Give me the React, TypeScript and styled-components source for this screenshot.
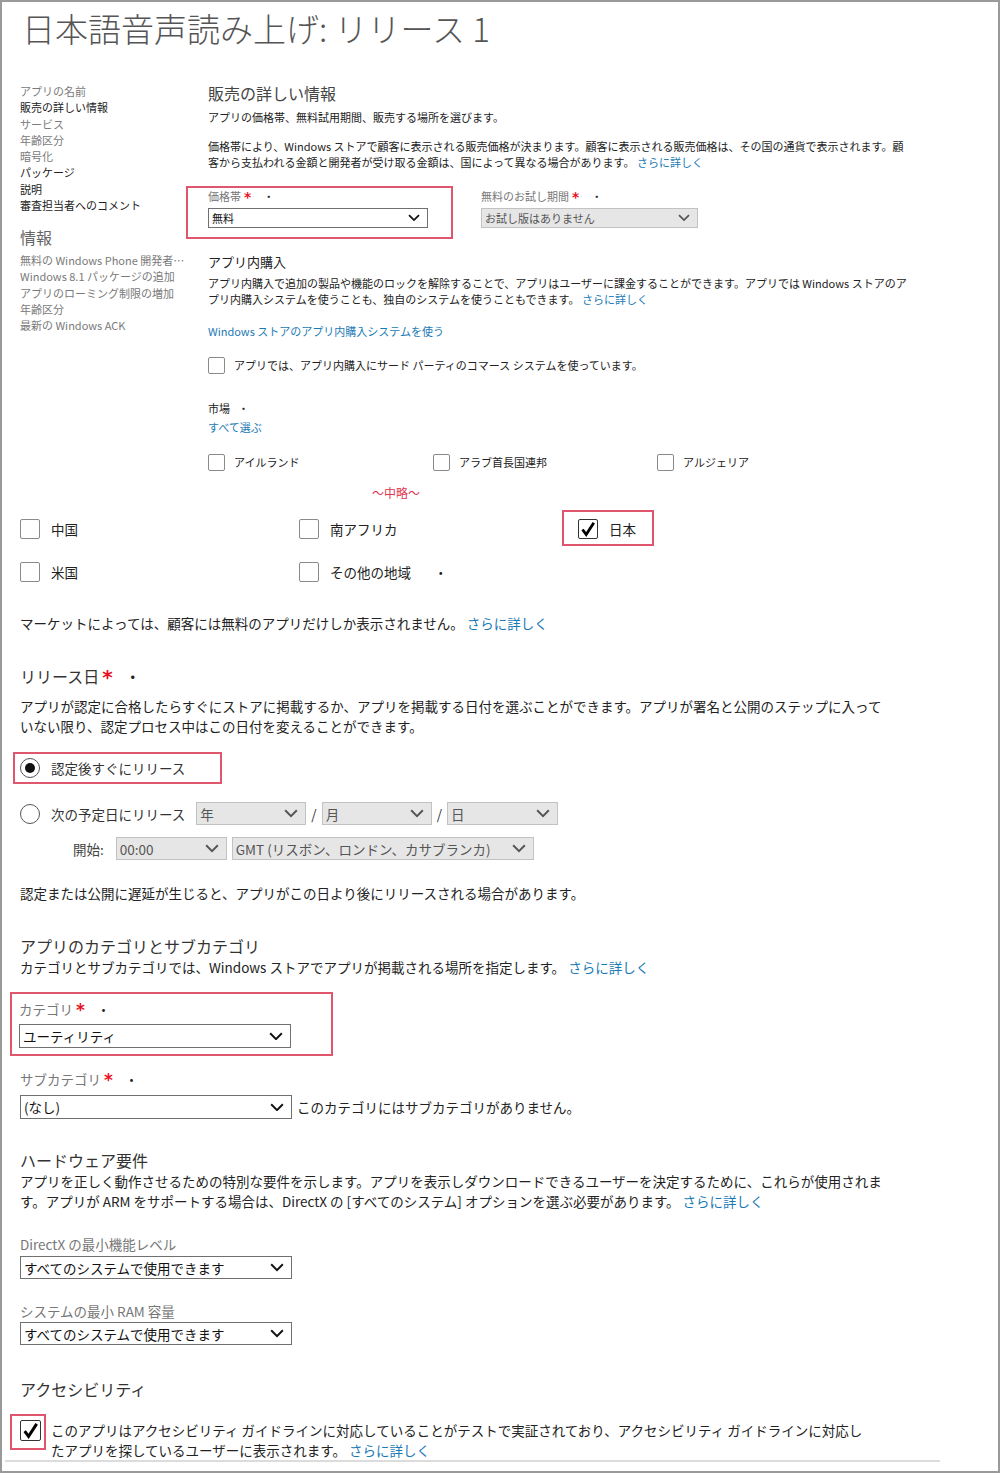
import React from "react";
import styled, { createGlobalStyle } from "styled-components";

const GlobalStyle = createGlobalStyle`
  body {
    margin: 0;
    background: #fff;
    color: #222;
    font-family: "Noto Sans CJK JP", "Noto Sans", sans-serif;
  }
`;

const Frame = styled.div`
  width: 1000px;
  height: 1473px;
  box-sizing: border-box;
  border: 2px solid #9a9a9a;
  overflow: hidden;
`;

const Title = styled.h1`
  margin: 6px 0 0 20px;
  font-size: 33px;
  line-height: 40px;
  font-weight: 300;
  color: #555;
  white-space: nowrap;
`;

/* ---------- upper (small scale) part ---------- */

const Top = styled.div`
  display: flex;
  margin-top: 35px;
  padding-left: 18px;
`;

const Sidebar = styled.nav`
  width: 188px;
  flex: none;
  font-size: 11px;
  line-height: 16.25px;
  white-space: nowrap;
`;

const NavItem = styled.div<{ $muted?: boolean }>`
  color: ${(p) => (p.$muted ? "#7a7a7a" : "#222")};
`;

const SideHeading = styled.div`
  margin-top: 14px;
  font-size: 16px;
  line-height: 20px;
  color: #666;
`;

const InfoList = styled.div`
  margin-top: 5px;
  color: #7a7a7a;
`;

const Main = styled.main`
  flex: 1;
  min-width: 0;
`;

const SectionTitle = styled.h2`
  margin: 0;
  font-size: 16px;
  line-height: 20px;
  font-weight: 400;
  color: #444;
`;

const SubTitle = styled.h3<{ $mt: number }>`
  margin: ${(p) => p.$mt}px 0 0;
  font-size: 13px;
  line-height: 18px;
  font-weight: 400;
  color: #222;
`;

const Small = styled.p<{ $mt: number }>`
  margin: ${(p) => p.$mt}px 0 0;
  font-size: 11px;
  line-height: 16px;
  white-space: nowrap;
  color: #222;
`;

const Link = styled.a`
  color: #1b7ab5;
  text-decoration: none;
`;

const FieldRow = styled.div`
  display: flex;
  gap: 6px;
  margin: 16px 0 0 -22px;
`;

const Field = styled.div<{ $hl?: boolean }>`
  border: 2px solid ${(p) => (p.$hl ? "#e0566c" : "transparent")};
  padding: 0 23px 9px 20px;
  display: flex;
  flex-direction: column;
  gap: 4px;
`;

const FieldLabel = styled.div`
  font-size: 11px;
  line-height: 16px;
  color: #777;
  white-space: nowrap;
`;

const Asterisk = styled.span`
  font-family: "DejaVu Sans", sans-serif;
  color: #e81123;
  font-weight: 700;
  font-size: 1.25em;
  line-height: 0;
  vertical-align: -0.05em;
  margin-left: 3px;
`;

const Dot = styled.span<{ $ml: number }>`
  margin-left: ${(p) => p.$ml}px;
  color: #222;
`;

const CheckRow = styled.label<{ $mt: number; $gap: number }>`
  display: flex;
  align-items: center;
  gap: ${(p) => p.$gap}px;
  margin-top: ${(p) => p.$mt}px;
  white-space: nowrap;
`;

const SmallCheckText = styled.span`
  font-size: 11px;
  line-height: 18px;
`;

const MarketGrid = styled.div`
  display: grid;
  grid-template-columns: 225px 224px 200px;
  margin-top: 18px;
`;

const Omitted = styled.div`
  margin-top: 14px;
  padding-left: 164px;
  font-size: 12px;
  line-height: 16px;
  color: #e0364f;
`;

/* ---------- lower (large scale) part ---------- */

const Lower = styled.div`
  padding-left: 18px;
  margin-top: 18px;
`;

const CountryGrid = styled.div`
  display: grid;
  grid-template-columns: 279px 279px 279px;
  grid-auto-rows: 20px;
  row-gap: 23px;
`;

const CountryItem = styled.label<{ $hl?: boolean }>`
  justify-self: start;
  display: flex;
  align-items: center;
  gap: 11px;
  font-size: 13.5px;
  line-height: 20px;
  white-space: nowrap;
  ${(p) =>
    p.$hl &&
    `
    border: 2px solid #e0566c;
    padding: 7px 16px 5px 14px;
    margin: -9px -18px -7px -16px;
  `}
`;

const Body = styled.p<{ $mt: number }>`
  margin: ${(p) => p.$mt}px 0 0;
  font-size: 13.5px;
  line-height: 20px;
  white-space: nowrap;
  color: #222;
`;

const Heading = styled.h3<{ $mt: number }>`
  margin: ${(p) => p.$mt}px 0 0;
  font-size: 16px;
  line-height: 22px;
  font-weight: 400;
  color: #333;
  white-space: nowrap;
`;

const GrayLabel = styled.div<{ $mt: number }>`
  margin-top: ${(p) => p.$mt}px;
  font-size: 13.5px;
  line-height: 20px;
  color: #777;
  white-space: nowrap;
`;

const RadioRow = styled.label<{ $hl?: boolean }>`
  display: flex;
  align-items: center;
  gap: 11px;
  width: fit-content;
  height: 20px;
  font-size: 13.5px;
  white-space: nowrap;
  color: #333;
  ${(p) =>
    p.$hl &&
    `
    border: 2px solid #e0566c;
    padding: 4px 35px 4px 5px;
    margin-left: -7px;
    margin-bottom: -6px;
  `}
`;

const HlWrap = styled.div`
  margin-top: 16px;
`;

const DateRow = styled.div`
  display: flex;
  align-items: center;
  margin-top: 24px;
  height: 23px;
  font-size: 13.5px;
  white-space: nowrap;
  color: #333;
`;

const DateSelects = styled.div`
  display: flex;
  align-items: center;
  gap: 5px;
  margin-left: 11px;
`;

const StartRow = styled.div`
  display: flex;
  align-items: center;
  gap: 5px;
  margin-top: 12px;
  padding-left: 53px;
  font-size: 13.5px;
  color: #444;
  white-space: nowrap;
`;

const StartLabel = styled.span`
  margin-right: 7px;
`;

const CategoryBox = styled.div`
  margin: 15px 0 0 -10px;
  width: 323px;
  box-sizing: border-box;
  border: 2px solid #e0566c;
  padding: 5px 40px 6px 7px;
`;

const SelectRow = styled.div<{ $mt: number }>`
  display: flex;
  align-items: center;
  gap: 5px;
  margin-top: ${(p) => p.$mt}px;
  font-size: 13.5px;
  white-space: nowrap;
`;

const AccessRow = styled.div`
  display: flex;
  align-items: flex-start;
  gap: 10px;
  margin-top: 20px;
`;

const CheckHighlight = styled.div`
  border: 2px solid #e0566c;
  padding: 4px 3px 4px 8px;
  margin: -6px -5px 0 -10px;
`;

const Rule = styled.div`
  margin-left: -15px;
  width: 935px;
  height: 2px;
  background: #dcdcdc;
`;

/* ---------- controls ---------- */

const Box = styled.span<{ $s: number; $on?: boolean }>`
  flex: none;
  width: ${(p) => p.$s}px;
  height: ${(p) => p.$s}px;
  box-sizing: border-box;
  border: 1px solid ${(p) => (p.$on ? "#333" : "#8a8a8a")};
  border-radius: 2px;
  background: #fff;
  display: inline-flex;
  align-items: center;
  justify-content: center;
`;

const Check = ({ size, on }: { size: number; on?: boolean }) => (
  <Box $s={size} $on={on}>
    {on && (
      <svg width={size - 4} height={size - 4} viewBox="0 0 16 16">
        <path d="M2.5 8.5 L6.2 13.5 L13.8 1.8" fill="none" stroke="#000" strokeWidth="2.8" strokeLinejoin="miter" />
      </svg>
    )}
  </Box>
);

const RadioCircle = styled.span<{ $on?: boolean }>`
  flex: none;
  width: 20px;
  height: 20px;
  box-sizing: border-box;
  border: 1.5px solid #555;
  border-radius: 50%;
  display: inline-flex;
  align-items: center;
  justify-content: center;
  &::after {
    content: "";
    width: 10px;
    height: 10px;
    border-radius: 50%;
    background: ${(p) => (p.$on ? "#111" : "transparent")};
  }
`;

const SelectBox = styled.div<{ $w: number; $h: number; $fs: number; $off?: boolean }>`
  flex: none;
  width: ${(p) => p.$w}px;
  height: ${(p) => p.$h}px;
  box-sizing: border-box;
  border: 1px solid ${(p) => (p.$off ? "#c2c2c2" : "#707070")};
  background: ${(p) => (p.$off ? "#e6e6e6" : "#fff")};
  color: ${(p) => (p.$off ? "#555" : "#111")};
  display: flex;
  align-items: center;
  justify-content: space-between;
  padding: 0 7px 0 3px;
  font-size: ${(p) => p.$fs}px;
  white-space: nowrap;
`;

const Select = ({
  w,
  h,
  fs,
  off,
  children,
}: {
  w: number;
  h: number;
  fs: number;
  off?: boolean;
  children: React.ReactNode;
}) => {
  const cw = fs > 12 ? 14 : 12;
  return (
    <SelectBox $w={w} $h={h} $fs={fs} $off={off}>
      <span>{children}</span>
      <svg width={cw} height={cw * 0.6} viewBox="0 0 12 7">
        <polyline points="1,1 6,6 11,1" fill="none" stroke={off ? "#555" : "#111"} strokeWidth="1.7" />
      </svg>
    </SelectBox>
  );
};

const Slash = styled.span`
  color: #333;
`;

export default function App() {
  return (
    <>
      <GlobalStyle />
      <Frame>
        <Title>日本語音声読み上げ: リリース 1</Title>

        <Top>
          <Sidebar>
            <NavItem $muted>アプリの名前</NavItem>
            <NavItem>販売の詳しい情報</NavItem>
            <NavItem $muted>サービス</NavItem>
            <NavItem $muted>年齢区分</NavItem>
            <NavItem $muted>暗号化</NavItem>
            <NavItem>パッケージ</NavItem>
            <NavItem>説明</NavItem>
            <NavItem>審査担当者へのコメント</NavItem>
            <SideHeading>情報</SideHeading>
            <InfoList>
              <div>無料の Windows Phone 開発者…</div>
              <div>Windows 8.1 パッケージの追加</div>
              <div>アプリのローミング制限の増加</div>
              <div>年齢区分</div>
              <div>最新の Windows ACK</div>
            </InfoList>
          </Sidebar>

          <Main>
            <SectionTitle>販売の詳しい情報</SectionTitle>
            <Small $mt={6}>アプリの価格帯、無料試用期間、販売する場所を選びます。</Small>
            <Small $mt={13}>
              価格帯により、Windows ストアで顧客に表示される販売価格が決まります。顧客に表示される販売価格は、その国の通貨で表示されます。顧
              <br />
              客から支払われる金額と開発者が受け取る金額は、国によって異なる場合があります。 <Link>さらに詳しく</Link>
            </Small>

            <FieldRow>
              <Field $hl>
                <FieldLabel>
                  価格帯<Asterisk>*</Asterisk>
                  <Dot $ml={12}>・</Dot>
                </FieldLabel>
                <Select w={220} h={20} fs={11}>
                  無料
                </Select>
              </Field>
              <Field>
                <FieldLabel>
                  無料のお試し期間<Asterisk>*</Asterisk>
                  <Dot $ml={12}>・</Dot>
                </FieldLabel>
                <Select w={217} h={20} fs={11} off>
                  お試し版はありません
                </Select>
              </Field>
            </FieldRow>

            <SubTitle $mt={14}>アプリ内購入</SubTitle>
            <Small $mt={4}>
              アプリ内購入で追加の製品や機能のロックを解除することで、アプリはユーザーに課金することができます。アプリでは Windows ストアのア
              <br />
              プリ内購入システムを使うことも、独自のシステムを使うこともできます。 <Link>さらに詳しく</Link>
            </Small>
            <Small $mt={16}>
              <Link>Windows ストアのアプリ内購入システムを使う</Link>
            </Small>
            <CheckRow $mt={17} $gap={9}>
              <Check size={17} />
              <SmallCheckText>アプリでは、アプリ内購入にサード パーティのコマース システムを使っています。</SmallCheckText>
            </CheckRow>

            <Small $mt={26}>
              市場<Dot $ml={8}>・</Dot>
            </Small>
            <Small $mt={3}>
              <Link>すべて選ぶ</Link>
            </Small>
            <MarketGrid>
              <CheckRow $mt={0} $gap={9}>
                <Check size={17} />
                <SmallCheckText>アイルランド</SmallCheckText>
              </CheckRow>
              <CheckRow $mt={0} $gap={9}>
                <Check size={17} />
                <SmallCheckText>アラブ首長国連邦</SmallCheckText>
              </CheckRow>
              <CheckRow $mt={0} $gap={9}>
                <Check size={17} />
                <SmallCheckText>アルジェリア</SmallCheckText>
              </CheckRow>
            </MarketGrid>
            <Omitted>～中略～</Omitted>
          </Main>
        </Top>

        <Lower>
          <CountryGrid>
            <CountryItem>
              <Check size={20} />
              中国
            </CountryItem>
            <CountryItem>
              <Check size={20} />
              南アフリカ
            </CountryItem>
            <CountryItem $hl>
              <Check size={20} on />
              日本
            </CountryItem>
            <CountryItem>
              <Check size={20} />
              米国
            </CountryItem>
            <CountryItem>
              <Check size={20} />
              その他の地域<Dot $ml={12}>・</Dot>
            </CountryItem>
          </CountryGrid>

          <Body $mt={31}>
            マーケットによっては、顧客には無料のアプリだけしか表示されません。 <Link>さらに詳しく</Link>
          </Body>

          <Heading $mt={32}>
            リリース日<Asterisk>*</Asterisk>
            <Dot $ml={12}>・</Dot>
          </Heading>
          <Body $mt={9}>
            アプリが認定に合格したらすぐにストアに掲載するか、アプリを掲載する日付を選ぶことができます。アプリが署名と公開のステップに入って
            <br />
            いない限り、認定プロセス中はこの日付を変えることができます。
          </Body>

          <HlWrap>
            <RadioRow $hl>
              <RadioCircle $on />
              認定後すぐにリリース
            </RadioRow>
          </HlWrap>

          <DateRow>
            <RadioRow>
              <RadioCircle />
              次の予定日にリリース
            </RadioRow>
            <DateSelects>
              <Select w={110} h={23} fs={13.5} off>
                年
              </Select>
              <Slash>/</Slash>
              <Select w={110} h={23} fs={13.5} off>
                月
              </Select>
              <Slash>/</Slash>
              <Select w={111} h={23} fs={13.5} off>
                日
              </Select>
            </DateSelects>
          </DateRow>

          <StartRow>
            <StartLabel>開始:</StartLabel>
            <Select w={111} h={23} fs={13.5} off>
              00:00
            </Select>
            <Select w={302} h={23} fs={13.5} off>
              GMT (リスボン、ロンドン、カサブランカ)
            </Select>
          </StartRow>

          <Body $mt={23}>認定または公開に遅延が生じると、アプリがこの日より後にリリースされる場合があります。</Body>

          <Heading $mt={32}>アプリのカテゴリとサブカテゴリ</Heading>
          <Body $mt={0}>
            カテゴリとサブカテゴリでは、Windows ストアでアプリが掲載される場所を指定します。 <Link>さらに詳しく</Link>
          </Body>

          <CategoryBox>
            <GrayLabel $mt={0}>
              カテゴリ<Asterisk>*</Asterisk>
              <Dot $ml={12}>・</Dot>
            </GrayLabel>
            <SelectRow $mt={5}>
              <Select w={272} h={24} fs={13.5}>
                ユーティリティ
              </Select>
            </SelectRow>
          </CategoryBox>

          <GrayLabel $mt={13}>
            サブカテゴリ<Asterisk>*</Asterisk>
            <Dot $ml={12}>・</Dot>
          </GrayLabel>
          <SelectRow $mt={6}>
            <Select w={272} h={24} fs={13.5}>
              (なし)
            </Select>
            <span>このカテゴリにはサブカテゴリがありません。</span>
          </SelectRow>

          <Heading $mt={30}>ハードウェア要件</Heading>
          <Body $mt={0}>
            アプリを正しく動作させるための特別な要件を示します。アプリを表示しダウンロードできるユーザーを決定するために、これらが使用されま
            <br />
            す。アプリが ARM をサポートする場合は、DirectX の [すべてのシステム] オプションを選ぶ必要があります。 <Link>さらに詳しく</Link>
          </Body>

          <GrayLabel $mt={23}>DirectX の最小機能レベル</GrayLabel>
          <SelectRow $mt={2}>
            <Select w={272} h={23} fs={13.5}>
              すべてのシステムで使用できます
            </Select>
          </SelectRow>

          <GrayLabel $mt={22}>システムの最小 RAM 容量</GrayLabel>
          <SelectRow $mt={1}>
            <Select w={272} h={23} fs={13.5}>
              すべてのシステムで使用できます
            </Select>
          </SelectRow>

          <Heading $mt={33}>アクセシビリティ</Heading>
          <AccessRow>
            <CheckHighlight>
              <Check size={21} on />
            </CheckHighlight>
            <Body $mt={0}>
              このアプリはアクセシビリティ ガイドラインに対応していることがテストで実証されており、アクセシビリティ ガイドラインに対応し
              <br />
              たアプリを探しているユーザーに表示されます。 <Link>さらに詳しく</Link>
            </Body>
          </AccessRow>
          <Rule />
        </Lower>
      </Frame>
    </>
  );
}
